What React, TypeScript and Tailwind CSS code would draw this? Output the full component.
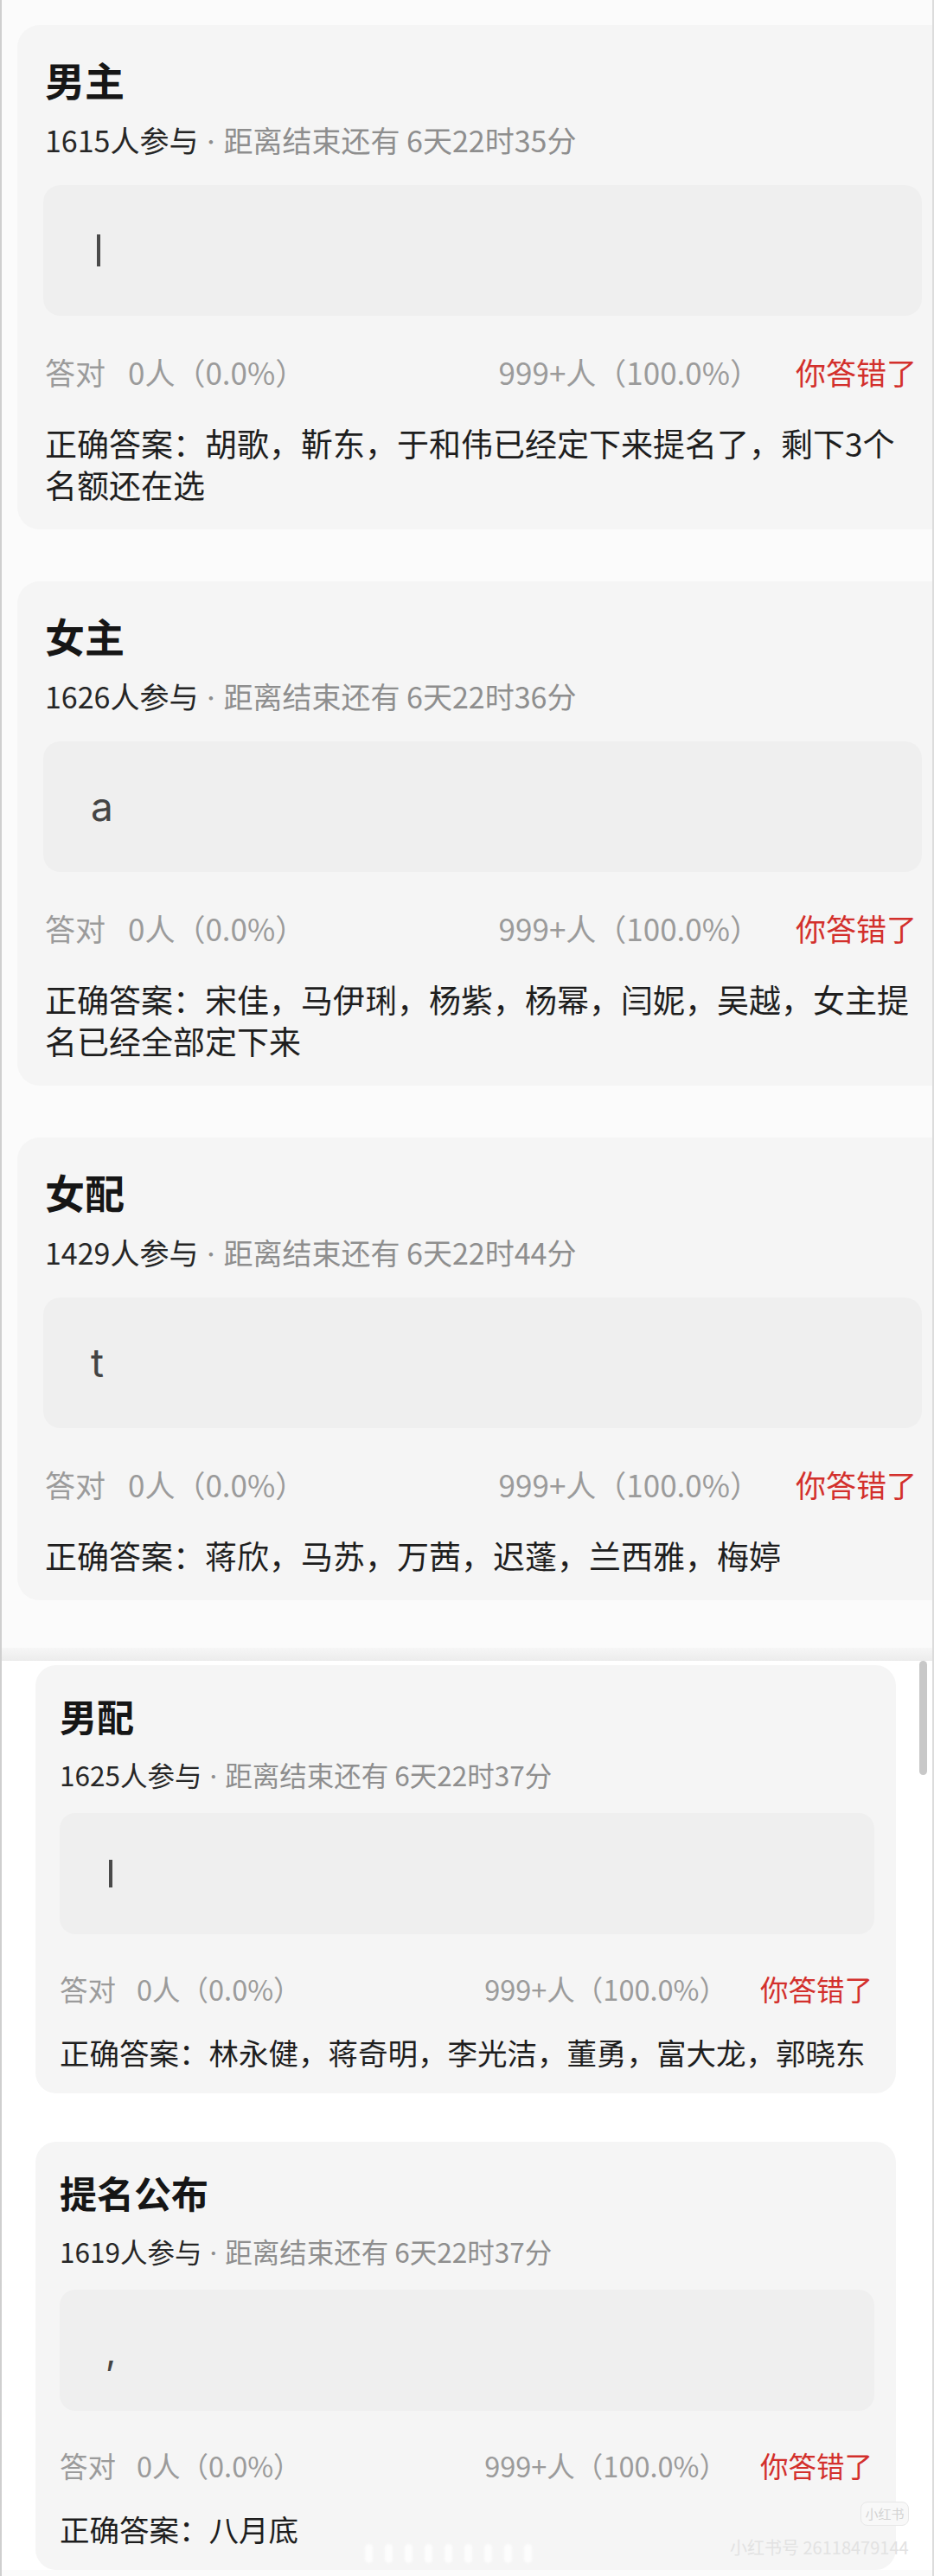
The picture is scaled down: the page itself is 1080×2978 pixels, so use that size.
type Quiz = {
  title: string;
  count: string;
  remain: string;
  typed: string;
  answer: string[];
};

const firstPage: Quiz[] = [
  {
    title: "男主",
    count: "1615人参与",
    remain: "6天22时35分",
    typed: "|",
    answer: ["正确答案：胡歌，靳东，于和伟已经定下来提名了，剩下3个", "名额还在选"],
  },
  {
    title: "女主",
    count: "1626人参与",
    remain: "6天22时36分",
    typed: "a",
    answer: ["正确答案：宋佳，马伊琍，杨紫，杨幂，闫妮，吴越，女主提", "名已经全部定下来"],
  },
  {
    title: "女配",
    count: "1429人参与",
    remain: "6天22时44分",
    typed: "t",
    answer: ["正确答案：蒋欣，马苏，万茜，迟蓬，兰西雅，梅婷"],
  },
];

const secondPage: Quiz[] = [
  {
    title: "男配",
    count: "1625人参与",
    remain: "6天22时37分",
    typed: "|",
    answer: ["正确答案：林永健，蒋奇明，李光洁，董勇，富大龙，郭晓东"],
  },
  {
    title: "提名公布",
    count: "1619人参与",
    remain: "6天22时37分",
    typed: ",",
    answer: ["正确答案：八月底"],
  },
];

// two scales: the first page is shown a bit larger than the second
const sizes = {
  large: {
    card: "ml-[18px] rounded-l-[26px] pl-[32px] pr-[12px] pt-[34px] pb-[28px]",
    title: "text-[46px] leading-[56px]",
    sub: "mt-[21px] h-[44px] text-[34px] leading-[44px]",
    box: "mt-[30px] -ml-[2px] h-[151px] rounded-[20px]",
    caret: "ml-[62px] w-[4px] h-[37px]",
    char: "pl-[55px] text-[46px]",
    stats: "mt-[43px] pr-[6px] text-[35px] leading-[44px]",
    gapLeft: "ml-[26px]",
    gapRight: "ml-[41px]",
    answer: "mt-[36px] text-[37px] leading-[48px]",
  },
  small: {
    card: "ml-[39px] w-[995px] rounded-[24px] pl-[28px] pr-[25px] pt-[32px] pb-[26px]",
    title: "text-[43px] leading-[52px]",
    sub: "mt-[22px] h-[40px] text-[31.5px] leading-[40px]",
    box: "mt-[25px] h-[140px] rounded-[18px]",
    caret: "ml-[57px] w-[4px] h-[32px]",
    char: "pl-[53px] text-[43px]",
    stats: "mt-[43px] pr-[2px] text-[32.5px] leading-[40px]",
    gapLeft: "ml-[24px]",
    gapRight: "ml-[38px]",
    answer: "mt-[31px] text-[34.5px] leading-[44px]",
  },
};

function QuizCard({ quiz, size }: { quiz: Quiz; size: "large" | "small" }) {
  const s = sizes[size];
  return (
    <div className={`bg-[#f5f5f5] ${s.card}`}>
      <h2 className={`font-bold text-[#161616] ${s.title}`}>{quiz.title}</h2>
      <p className={`whitespace-nowrap ${s.sub}`}>
        <span className="text-[#262626]">{quiz.count}</span>
        <span className="font-['Inter',sans-serif] text-[#8e8e8e]"> · </span>
        <span className="text-[#8e8e8e]">距离结束还有 {quiz.remain}</span>
      </p>
      <div className={`flex items-center bg-[#efefef] ${s.box}`}>
        {quiz.typed === "|" ? (
          <div className={`bg-[#4a4a4a] ${s.caret}`} />
        ) : (
          <span className={`font-['Inter',sans-serif] text-[#444] ${s.char}`}>
            {quiz.typed}
          </span>
        )}
      </div>
      <div className={`flex items-center text-[#9b9b9b] ${s.stats}`}>
        <span>答对</span>
        <span className={s.gapLeft}>0人（0.0%）</span>
        <span className="ml-auto">999+人（100.0%）</span>
        <span className={`text-[#d3302c] ${s.gapRight}`}>你答错了</span>
      </div>
      <div className={`text-[#1e1e1e] ${s.answer}`}>
        {quiz.answer.map((line, i) => (
          <p key={i}>{line}</p>
        ))}
      </div>
    </div>
  );
}

export default function App() {
  return (
    <div className="h-[2978px] w-[1080px] overflow-hidden border-x-2 border-l-[#cfcfcf] border-r-[#dcdcdc] bg-[#fbfbfb] font-['Noto_Sans_CJK_SC',sans-serif]">
      <section className="flex flex-col gap-[60px] pt-[29px]">
        {firstPage.map((q) => (
          <QuizCard key={q.title} quiz={q} size="large" />
        ))}
      </section>

      <div className="mt-[55px] h-[15px] bg-gradient-to-b from-[#f6f6f6] to-[#ececec]" />

      <section className="relative flex flex-col gap-[56px] bg-white pt-[5px]">
        {secondPage.map((q) => (
          <QuizCard key={q.title} quiz={q} size="small" />
        ))}

        {/* scrollbar thumb */}
        <div className="absolute right-[6px] top-0 h-[132px] w-[9px] rounded-full bg-[#c8c8c8]" />

        {/* watermark */}
        <div className="absolute left-[993px] top-[972px] flex h-[28px] w-[56px] items-center justify-center rounded-[8px] border border-[#e8e8e8] bg-[#f8f8f8] text-[15px] text-[#d2d2d2]">
          小红书
        </div>
        <div className="absolute left-[842px] top-[1013px] text-[20px] leading-[24px] text-[#e2e2e2]">
          小红书号 26118479144
        </div>
        <div className="absolute left-[420px] top-[1021px] flex gap-[14px] opacity-80 blur-[1px]">
          <div className="h-[22px] w-[9px] rounded-full bg-white" />
          <div className="h-[22px] w-[9px] rounded-full bg-white" />
          <div className="h-[22px] w-[9px] rounded-full bg-white" />
          <div className="h-[22px] w-[9px] rounded-full bg-white" />
          <div className="h-[22px] w-[9px] rounded-full bg-white" />
          <div className="h-[22px] w-[9px] rounded-full bg-white" />
          <div className="h-[22px] w-[9px] rounded-full bg-white" />
          <div className="h-[22px] w-[9px] rounded-full bg-white" />
          <div className="h-[22px] w-[9px] rounded-full bg-white" />
        </div>
      </section>
    </div>
  );
}
